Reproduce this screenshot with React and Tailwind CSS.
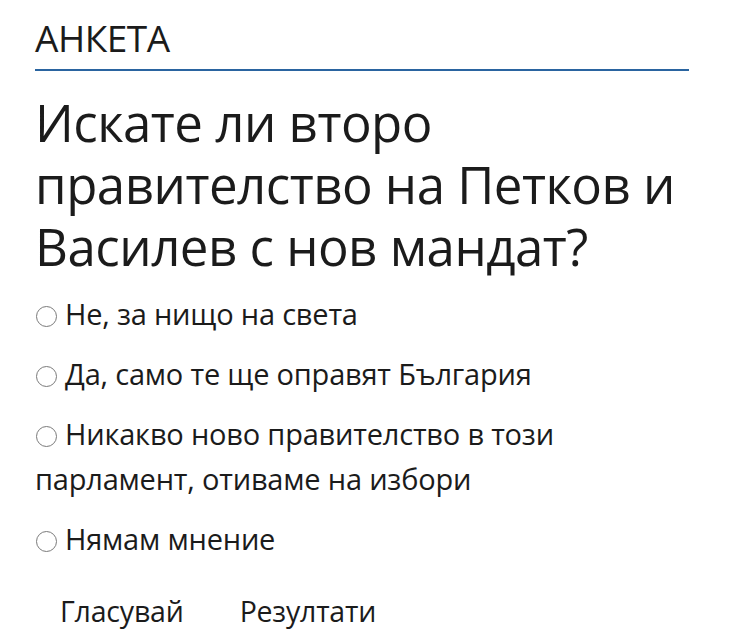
import React, { useState } from "react";

// Poll widget: question + radio options + vote/results links
const OPTIONS = [
  "Не, за нищо на света",
  "Да, само те ще оправят България",
  "Никакво ново правителство в този парламент, отиваме на избори",
  "Нямам мнение",
];

const App = () => {
  const [choice, setChoice] = useState(null);

  return (
    <div className="min-h-screen bg-white text-[#1b1b1b]" style={{ fontFamily: '"Open Sans", "Noto Sans", sans-serif' }}>
      <div className="w-[654px] ml-[35px] pt-[18px]">
        {/* Header */}
        <div className="border-b-2 border-[#2a64a0] pb-[11px]">
          <h2 className="text-[37px] leading-[40px] tracking-[-0.5px]">АНКЕТА</h2>
        </div>

        {/* Question */}
        <h1 className="mt-[20px] text-[51px] leading-[62px] tracking-[-0.5px]">
          Искате ли второ правителство на Петков и Василев с нов мандат?
        </h1>

        {/* Options */}
        <div className="mt-[14px] flex flex-col gap-[15px]">
          {OPTIONS.map((opt, i) => (
            <label key={i} className="block text-[29px] leading-[45px] tracking-[-0.2px] cursor-pointer">
              <input
                type="radio"
                name="poll"
                checked={choice === i}
                onChange={() => setChoice(i)}
                className="appearance-none inline-block align-[-2px] w-[21px] h-[21px] ml-[1px] mr-[8px] rounded-full border border-[#7a7a7a] bg-white"
              />
              {opt}
            </label>
          ))}
        </div>

        {/* Actions */}
        <div className="mt-[30px] flex gap-[56px] pl-[25px] text-[28.5px] leading-[40px] tracking-[-0.2px]">
          <button className="text-[#1b1b1b]">Гласувай</button>
          <button className="text-[#1b1b1b]">Резултати</button>
        </div>
      </div>
    </div>
  );
};

export default App;
